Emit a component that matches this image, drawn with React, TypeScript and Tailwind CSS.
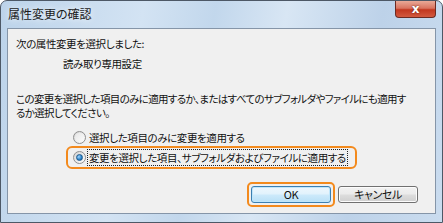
import React from "react";

const jp = "[font-family:'Noto_Sans_CJK_JP','Noto_Sans',sans-serif] [font-feature-settings:'palt']";

function Radio({ checked }: { checked?: boolean }) {
  return (
    <span className="relative flex h-[13px] w-[13px] shrink-0 items-center justify-center rounded-full border border-[#8f8f8f] bg-gradient-to-br from-[#d4d4d4] to-[#ffffff]">
      {checked ? (
        <span className="h-[7px] w-[7px] rounded-full border border-[#1d5a8c] bg-[radial-gradient(circle_at_35%_35%,#9ed4ff,#2a82c9_60%,#13507f)]" />
      ) : (
        <span className="h-[9px] w-[9px] rounded-full bg-gradient-to-br from-[#e6e6e6] to-[#fbfbfb]" />
      )}
    </span>
  );
}

export default function App() {
  return (
    <div className={`w-[443px] h-[223px] overflow-hidden ${jp} text-[10.5px] leading-[13px] tracking-[-0.4px] text-[#111] whitespace-nowrap`}>
      {/* Window frame */}
      <div className="flex h-full w-full flex-col rounded-t-[7px] border border-[#4d5866] bg-[linear-gradient(100deg,#bcd3ea_0%,#d3e3f3_30%,#c2d7ec_45%,#d8e6f4_60%,#bdd2e9_80%,#cadcef_100%)]">
        {/* Title bar */}
        <div className="flex h-[27px] shrink-0 items-start justify-between">
          <span className="ml-[7px] mt-[6px] text-[12px] leading-[14px] tracking-normal text-[#1a1a1a] [text-shadow:0_0_6px_#ffffff]">
            属性変更の確認
          </span>
          <div className="mr-[6px] flex h-[17px] w-[41px] items-center justify-center rounded-b-[4px] border border-t-0 border-[#6b2a22] bg-[linear-gradient(180deg,#e9a997_0%,#d97460_45%,#c2371f_55%,#d2593f_100%)]">
            <span className="font-['DejaVu_Sans',sans-serif] text-[12px] font-bold leading-[12px] text-white [text-shadow:0_0_2px_#5a1a10]">
              x
            </span>
          </div>
        </div>

        {/* Content panel */}
        <div className="mx-[6px] flex h-[186px] shrink-0 flex-col border border-[#8595a8] bg-[#f0f0f0] pl-[8px] pr-[4px]">
          <p className="mt-[8px]">次の属性変更を選択しました:</p>
          <p className="ml-[47px] mt-[7px]">読み取り専用設定</p>
          <p className="mt-[22px] tracking-[-0.65px]">
            この変更を選択した項目のみに適用するか、またはすべてのサブフォルダやファイルにも適用す
          </p>
          <p className="mt-[1px] tracking-[-0.65px]">るか選択してください。</p>

          <div className="ml-[57px] mt-[10px] flex h-[16px] items-center gap-[2px]">
            <Radio />
            <span className="pl-[1px]">選択した項目のみに変更を適用する</span>
          </div>

          <div className="ml-[50px] mt-[1px] flex h-[23px] w-[291px] items-center rounded-[6px] border-2 border-[#f38a1d] pl-[5px]">
            <Radio checked />
            <span className="ml-[1px] border border-dotted border-[#222] px-[1px] leading-[15px]">
              変更を選択した項目、サブフォルダおよびファイルに適用する
            </span>
          </div>

          <div className="mt-[13px] flex justify-end gap-[3px] pr-[9px]">
            <div className="rounded-[5px] border-2 border-[#f38a1d] p-[2px]">
              <button className="flex h-[17px] w-[80px] items-center justify-center rounded-[3px] border border-[#3c7fb1] bg-[linear-gradient(180deg,#eef7fd_0%,#e1f2fc_48%,#cdeafb_52%,#b9e0f6_100%)] text-[11px] shadow-[inset_0_0_0_1px_#bfe6fb]">
                OK
              </button>
            </div>
            <div className="p-[4px] pl-0">
              <button className="flex h-[17px] w-[80px] items-center justify-center rounded-[3px] border border-[#707070] bg-[linear-gradient(180deg,#f2f2f2_0%,#ebebeb_48%,#dddddd_52%,#cfcfcf_100%)] text-[11px] shadow-[inset_0_0_0_1px_#fcfcfc]">
                キャンセル
              </button>
            </div>
          </div>
        </div>
      </div>
    </div>
  );
}
